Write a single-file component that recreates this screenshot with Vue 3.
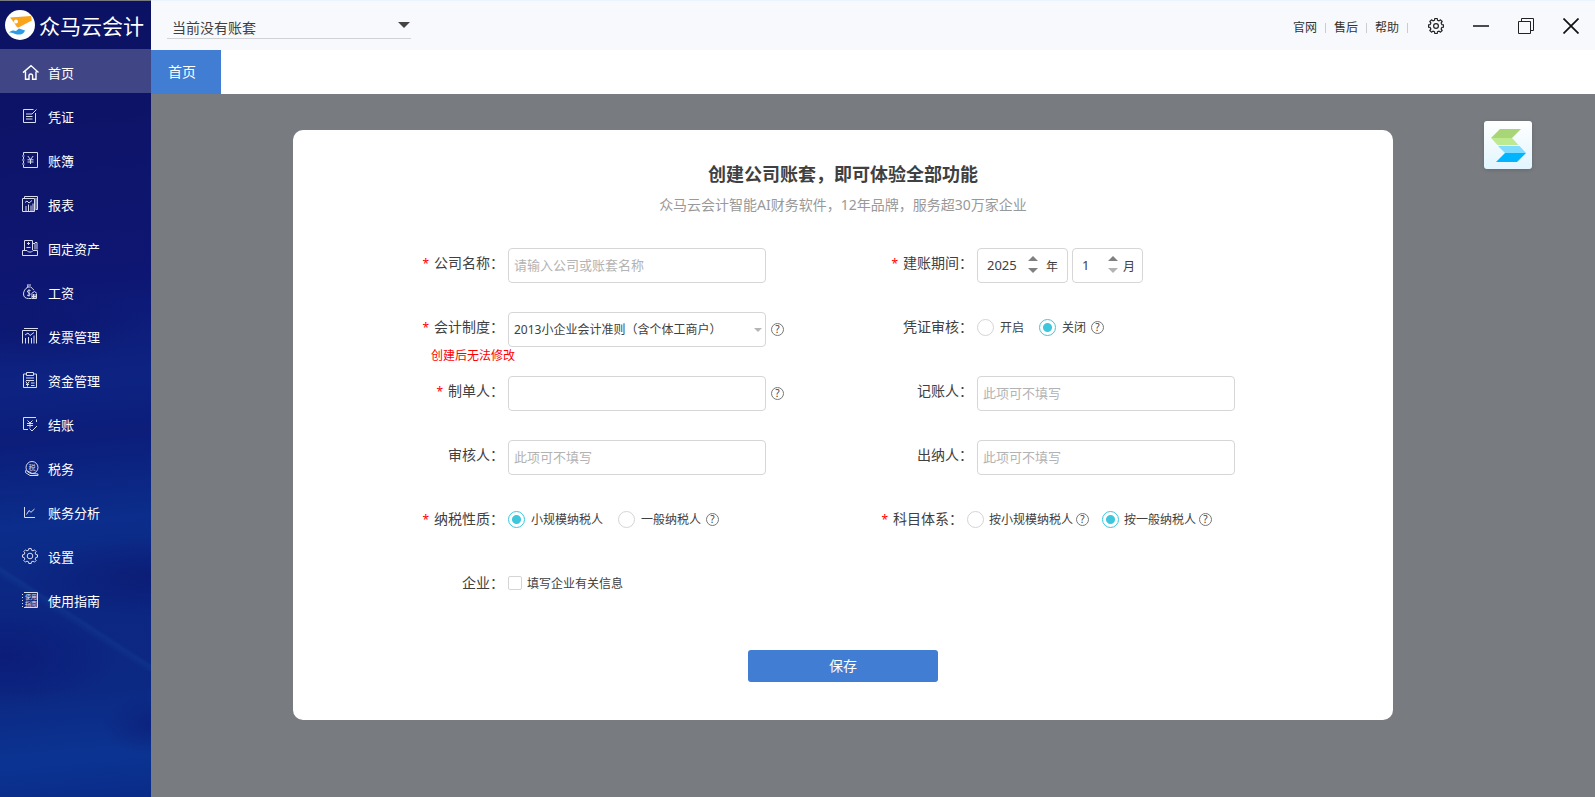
<script setup>
import { ref } from 'vue'

const menu = [
  { id: 'home', label: '首页' },
  { id: 'voucher', label: '凭证' },
  { id: 'ledger', label: '账簿' },
  { id: 'report', label: '报表' },
  { id: 'asset', label: '固定资产' },
  { id: 'salary', label: '工资' },
  { id: 'invoice', label: '发票管理' },
  { id: 'fund', label: '资金管理' },
  { id: 'closing', label: '结账' },
  { id: 'tax', label: '税务' },
  { id: 'analysis', label: '账务分析' },
  { id: 'setting', label: '设置' },
  { id: 'guide', label: '使用指南' },
]

// Outline of an eight-toothed gear centred on (8, 8).
function gearPath(outer, inner) {
  const at = (deg, r) => {
    const a = (deg * Math.PI) / 180
    return `${(8 + r * Math.cos(a)).toFixed(2)} ${(8 + r * Math.sin(a)).toFixed(2)}`
  }
  const points = []
  for (let i = 0; i < 8; i++) {
    const c = i * 45
    points.push(at(c - 14, inner), at(c - 9, outer), at(c + 9, outer), at(c + 14, inner))
  }
  return `M${points.join('L')}Z`
}
const gear = gearPath(7.6, 6)

const icons = {
  home: '<path d="M1 8.600 9 1.600l7.500 7M3.500 7.500V15.300H7v-3.500a1.800 1.800 0 0 1 3.600 0v3.500H14V7.500" stroke-width="1.4"/>',
  voucher: '<path d="M11.500 1.500h-10v13h12V5M4 6h6M4 8.500h6.500M4 11h6.500M10 6l4.500-4.500"/>',
  ledger: '<path d="M1.500 3V.5h14v15h-14V13M1.500 5v2M1.500 9v2M0 4h2.500M0 8h2.500M0 12h2.500M5.800 4l2.700 3.500L11.200 4M8.500 7.500V12M5.500 7.800h6M5.500 10h6"/>',
  report: '<path d="M2.500 2.500V.5h13v13h-2M.5 2.500h12v13H.5zM3 6.500l2-1.500 2 2 3-2.500M4 15V10M6.500 15V8.500M9 15V9.500M11 15V7.500"/><path d="M14 2v11"/>',
  asset: '<path d="M2.500 10V.5h8V10M4.500 7.500h4M5 3.500h3M6.500 2v3M11 3.500h2v6M13 2.500h2v7M.5 10.500h4.500l1.500 1.500h3l1.500-1.500h4.500v5H.5z"/>',
  salary: '<path d="M5 1h4M5.500 3h3M5.500 1.500l.5 1.500C3 4.500 1.500 7.500 1.500 10c0 3 2 4.500 5 4.500h3M8.500 3c1.500.7 2.500 1.800 3.300 3.200M8.500 6.500C6.500 5.700 5 6.500 5.500 8c.5 1 2.500.7 2.500 2.300C8 11.700 6.200 12 5 11M7 5.500v7M9.500 9.500 12.500 7.500l2.500 2M10 10v4.500h4.500V10M11.500 10v4.500M13 10v4.500M10 12.500h5"/>',
  invoice: '<path d="M2 .5h14M.5 15.500v-13h14v13M3 7l3-2 2 2.500 4-3M3.500 15.500V10M6.500 15.500V9M9.500 15.500V10M12 15.500V7.500"/>',
  fund: '<path d="M4 2H1.500v13.500h13V2H12M4.500.5h7v3h-7zM4 6h8M4 8.500h8M3.800 9.500 5.500 12l1.700-2.500M5.500 12v2.500M4 12.500h3M9 11h3.500M9 13.500h3.500"/>',
  closing: '<path d="M14.500 6V3.500M12 1.500H1.500v12H6M12 1.500h2M5.500 4.500 8 7l2.500-2.500M8 7v4.500M5 7.500h6M5 9.500h6M7.500 12.500 10 15l5-5"/>',
  tax: '<circle cx="10" cy="7.500" r="6"/><path d="M4 10l-.5 2.500L8 15.500h8V14l-6-.5-4.500-2.500"/><text x="6.500" y="10.200" font-size="7" fill="#d9dcec" stroke="none">税</text>',
  analysis: '<path d="M2.500 3v10.500H13M4.500 10.500 7 6.500l2 1.800L12.500 5"/>',
  setting: `<path d="${gear}"/><circle cx="8" cy="8" r="2.800"/>`,
  guide: '<path d="M2 .5h13.500v15H2M.5 2v1M.5 5v1M.5 8v1M.5 11v1M.5 14v1"/><text x="3" y="7.200" font-size="6" fill="#e4e6f2" stroke="none">使用</text><text x="3" y="13.600" font-size="6" fill="#e4e6f2" stroke="none">指南</text>',
}

const year = ref(2025)
const month = ref(1)
const audit = ref('off')
const nature = ref('small')
const subject = ref('general')
const companyInfo = ref(false)
const system = ref('2013')
const account = ref('none')
const form = ref({ company: '', maker: '', bookkeeper: '', auditor: '', cashier: '' })
</script>

<template>
  <div class="app">
    <aside class="sidebar">
      <div class="brand">
        <svg class="brand-logo" viewBox="0 0 30 30" aria-hidden="true">
          <circle cx="15" cy="15" r="15" fill="#fff" />
          <path d="M5 7.500 26 6 26.800 10.500 13 17.700C10.500 16.500 10.500 14 9 12.500z" fill="#fba31b" />
          <circle cx="11" cy="11.500" r="2" fill="#fff" />
          <path d="M4 22.500c3-2.500 5-2 7-1.500l3-2.500 6 2c-1 3.500-5 4.500-8 4-3-.5-5-2.500-8-2z" fill="#2e9be6" />
        </svg>
        <span>众马云会计</span>
      </div>
      <nav>
        <a v-for="(m, i) in menu" :key="m.id" href="#" class="menu-item" :class="{ active: i === 0 }">
          <svg viewBox="0 0 16 16" aria-hidden="true" v-html="icons[m.id]"></svg>
          <span>{{ m.label }}</span>
        </a>
      </nav>
    </aside>

    <div class="main">
      <header class="topbar">
        <div class="account">
          <select v-model="account" aria-label="账套">
            <option value="none">当前没有账套</option>
          </select>
          <svg viewBox="0 0 12 6" aria-hidden="true"><path d="M0 0h12L6 6z" fill="#444" /></svg>
        </div>
        <div class="top-right">
          <a href="#">官网</a>
          <a href="#">售后</a>
          <a href="#">帮助</a>
          <div class="window-tools">
            <button type="button" aria-label="设置">
              <svg viewBox="0 0 16 16" fill="none" stroke="#222" stroke-width="1.200" stroke-linejoin="round"><path :d="gear" /><circle cx="8" cy="8" r="2.400" /></svg>
            </button>
            <button type="button" aria-label="最小化">
              <svg viewBox="0 0 16 16" fill="none" stroke="#111" stroke-width="1.500"><path d="M0 8h16" /></svg>
            </button>
            <button type="button" aria-label="还原">
              <svg viewBox="0 0 16 16" fill="none" stroke="#222"><path d="M.5 3.500h12v12H.5zM3.500 3.500v-3h12v12h-3" /></svg>
            </button>
            <button type="button" aria-label="关闭">
              <svg viewBox="0 0 16 16" fill="none" stroke="#111" stroke-width="1.700"><path d="m.5.5 15 15M15.500.5l-15 15" /></svg>
            </button>
          </div>
        </div>
      </header>
      <div class="tabs"><button type="button" class="tab">首页</button></div>

      <main class="content">
        <button type="button" class="float-logo" aria-label="快捷入口">
          <svg viewBox="0 0 48 48" aria-hidden="true">
            <path d="M16 8h21l-9 9H7z" fill="#a8d676" />
            <path d="M7 17h21l6.500 7H13.500z" fill="#bdea90" />
            <path d="M14 25h21.500l6.500 7H21z" fill="#7edcff" />
            <path d="M21 32h21l-9 9H12z" fill="#00b4ff" />
          </svg>
        </button>

        <form class="card" @submit.prevent>
          <h1>创建公司账套，即可体验全部功能</h1>
          <p class="subtitle">众马云会计智能AI财务软件，12年品牌，服务超30万家企业</p>

          <div class="fields">
            <div class="field">
              <label class="label required" for="company">公司名称：</label>
              <input id="company" v-model="form.company" class="text" placeholder="请输入公司或账套名称" />
            </div>
            <div class="field">
              <label class="label required" for="year">建账期间：</label>
              <div class="period">
                <div class="stepper year">
                  <input id="year" v-model="year" inputmode="numeric" />
                  <div class="arrows">
                    <button type="button" class="up" aria-label="下一年" @click="year++"></button>
                    <button type="button" class="down" aria-label="上一年" @click="year--"></button>
                  </div>
                  <label for="year">年</label>
                </div>
                <div class="stepper month">
                  <input id="month" v-model="month" inputmode="numeric" />
                  <div class="arrows">
                    <button type="button" class="up" aria-label="下一月" @click="month++"></button>
                    <button type="button" class="down" aria-label="上一月" :disabled="month <= 1" @click="month--"></button>
                  </div>
                  <label for="month">月</label>
                </div>
              </div>
            </div>

            <div class="field">
              <label class="label required" for="system">会计制度：</label>
              <div class="with-help">
                <div class="select-box">
                  <select id="system" v-model="system" class="text">
                    <option value="2013">2013小企业会计准则（含个体工商户）</option>
                  </select>
                  <svg viewBox="0 0 8 4" aria-hidden="true"><path d="M0 0h8L4 4z" fill="#b5b5b5" /></svg>
                </div>
                <span class="help">?</span>
              </div>
              <p class="note">创建后无法修改</p>
            </div>
            <div class="field">
              <span class="label">凭证审核：</span>
              <div class="options">
                <label><input v-model="audit" type="radio" name="audit" value="on" />开启</label>
                <label><input v-model="audit" type="radio" name="audit" value="off" />关闭</label>
                <span class="help">?</span>
              </div>
            </div>

            <div class="field">
              <label class="label required" for="maker">制单人：</label>
              <div class="with-help">
                <input id="maker" v-model="form.maker" class="text" />
                <span class="help">?</span>
              </div>
            </div>
            <div class="field">
              <label class="label" for="bookkeeper">记账人：</label>
              <input id="bookkeeper" v-model="form.bookkeeper" class="text" placeholder="此项可不填写" />
            </div>

            <div class="field">
              <label class="label" for="auditor">审核人：</label>
              <input id="auditor" v-model="form.auditor" class="text" placeholder="此项可不填写" />
            </div>
            <div class="field">
              <label class="label" for="cashier">出纳人：</label>
              <input id="cashier" v-model="form.cashier" class="text" placeholder="此项可不填写" />
            </div>

            <div class="field">
              <span class="label required">纳税性质：</span>
              <div class="options">
                <label><input v-model="nature" type="radio" name="nature" value="small" />小规模纳税人</label>
                <label><input v-model="nature" type="radio" name="nature" value="general" />一般纳税人</label>
                <span class="help">?</span>
              </div>
            </div>
            <div class="field narrow">
              <span class="label required">科目体系：</span>
              <div class="options tight">
                <label><input v-model="subject" type="radio" name="subject" value="small" />按小规模纳税人</label>
                <span class="help">?</span>
                <label><input v-model="subject" type="radio" name="subject" value="general" />按一般纳税人</label>
                <span class="help">?</span>
              </div>
            </div>

            <div class="field">
              <span class="label">企业：</span>
              <div class="options">
                <label class="check"><input v-model="companyInfo" type="checkbox" />填写企业有关信息</label>
              </div>
            </div>
          </div>

          <button type="submit" class="save">保存</button>
        </form>
      </main>
    </div>
  </div>
</template>

<style>
body {
  margin: 0;
}
</style>

<style scoped>
.app,
.app * {
  box-sizing: border-box;
}
.app {
  display: flex;
  min-height: 100vh;
  font-family: "Noto Sans", "Noto Sans CJK SC", sans-serif;
  font-size: 12px;
  color: #404040;
}
a {
  color: inherit;
  text-decoration: none;
}
button {
  padding: 0;
  border: 0;
  background: none;
  font: inherit;
  cursor: pointer;
}
input,
select {
  font: inherit;
  color: inherit;
}

.sidebar {
  flex: none;
  width: 151px;
  border-top: 1px solid #777b80;
  color: #fff;
  background:
    linear-gradient(213deg, transparent 49%, rgba(24, 70, 155, 0.3) 51%, transparent 55%) 0 560px / 151px 110px no-repeat,
    radial-gradient(ellipse 110px 50px at 5% 655px, rgba(12, 26, 118, 0.8), transparent),
    radial-gradient(ellipse 130px 40px at 100% 576px, rgba(12, 26, 115, 0.8), transparent),
    radial-gradient(ellipse 50px 30px at 100% 724px, rgba(11, 30, 120, 0.7), transparent),
    radial-gradient(ellipse 110px 40px at 25% 325px, rgba(11, 20, 105, 0.5), transparent),
    linear-gradient(175deg, #0b1162 0, #0d1468 120px, #0d1672 280px, #0d2382 385px, #0c1d7a 440px, #0b2d8b 525px, #0b2782 600px, #0b2882 690px, #0b3492 760px, #0a2b88 100%);
}
.brand {
  display: flex;
  align-items: center;
  gap: 4px;
  height: 48px;
  padding-left: 5px;
  font-size: 21px;
  white-space: nowrap;
}
.brand-logo {
  flex: none;
  width: 30px;
  height: 30px;
}
.menu-item {
  display: flex;
  align-items: center;
  gap: 10px;
  height: 44px;
  padding: 2px 0 0 22px;
  font-size: 13px;
}
.menu-item.active {
  background: #404685;
}
.menu-item svg {
  overflow: visible;
  width: 16px;
  height: 16px;
  fill: none;
  stroke: #d9dcec;
  stroke-width: 1;
}
.menu-item.active svg {
  stroke: #fff;
}

.main {
  flex: 1;
  min-width: 0;
  display: flex;
  flex-direction: column;
}
.topbar {
  display: flex;
  justify-content: space-between;
  height: 50px;
  padding: 0 2px 0 16px;
  border-top: 1px solid #eaf4fe;
  background: #f8f9fd;
}
.account {
  position: relative;
  width: 244px;
  height: 38px;
  border-bottom: 1px solid #d0d2d6;
}
.account select {
  appearance: none;
  width: 100%;
  height: 37px;
  padding: 16px 20px 0 5px;
  border: 0;
  background: none;
  font-size: 14px;
  line-height: 20px;
}
.account svg {
  position: absolute;
  top: 21px;
  right: 1px;
  width: 12px;
  height: 6px;
  pointer-events: none;
}
.top-right {
  display: flex;
  align-items: center;
  height: 50px;
  color: #333;
}
.top-right > a {
  display: flex;
  align-items: center;
  width: 41px;
  padding-top: 4px;
  line-height: 18px;
}
.top-right > a::after {
  content: "";
  width: 1px;
  height: 10px;
  margin-left: 8px;
  background: #ccc;
}
.window-tools {
  display: flex;
  margin-left: -3px;
}
.window-tools button {
  display: flex;
  align-items: center;
  justify-content: center;
  width: 45px;
  height: 50px;
}
.window-tools svg {
  width: 16px;
  height: 16px;
}
.tabs {
  display: flex;
  height: 44px;
  background: #fff;
}
.tab {
  width: 70px;
  padding: 0 8px 2px 0;
  background: #417dd3;
  color: #fff;
  font-size: 14px;
}
.content {
  position: relative;
  flex: 1;
  padding: 36px 92px 48px 32px;
  background: #787b7f;
}
.float-logo {
  position: absolute;
  top: 27px;
  right: 63px;
  width: 48px;
  height: 48px;
  border-radius: 3px;
  background: linear-gradient(#fff, #e2f5fe);
  box-shadow: 0 1px 4px rgba(0, 0, 0, 0.15);
}
.float-logo svg {
  display: block;
}

.card {
  display: flex;
  flex-direction: column;
  align-items: center;
  max-width: 1100px;
  margin: 0 auto;
  padding: 31px 0 38px;
  border-radius: 10px;
  background: #fff;
}
h1 {
  margin: 0;
  font-size: 18px;
  line-height: 26px;
}
.subtitle {
  margin: 7px 0 32px;
  font-size: 14px;
  line-height: 22px;
  color: #999;
}
.fields {
  display: grid;
  grid-template-columns: 1fr 1fr;
  grid-auto-rows: 64px;
  width: 100%;
  max-width: 938px;
}
.field {
  display: grid;
  grid-template-columns: 130px 1fr;
  column-gap: 4px;
  align-content: start;
}
.field.narrow {
  grid-template-columns: 120px 1fr;
}
.label {
  font-size: 14px;
  line-height: 30px;
  text-align: right;
  white-space: nowrap;
}
.required::before {
  content: "*";
  margin-right: 5px;
  color: #f00;
  font-size: 12px;
}
.text {
  display: block;
  width: 258px;
  height: 35px;
  padding: 0 5px 2px;
  border: 1px solid #d6d6d6;
  border-radius: 4px;
  background: #fff;
  font-size: 13px;
}
.text::placeholder {
  color: #b3b3b3;
  opacity: 1;
}
.select-box {
  position: relative;
}
.select-box select {
  appearance: none;
  padding-bottom: 0;
  font-size: 12px;
}
.select-box svg {
  position: absolute;
  top: 16px;
  right: 4px;
  width: 8px;
  height: 4px;
  pointer-events: none;
}
.with-help {
  display: flex;
  align-items: center;
  gap: 5px;
}
.help {
  flex: none;
  width: 13px;
  height: 13px;
  border: 1px solid #777;
  border-radius: 50%;
  font-size: 10px;
  line-height: 11px;
  text-align: center;
}
.note {
  grid-column: 1 / -1;
  margin: 0;
  padding-left: 57px;
  line-height: 18px;
  color: #f00;
}
.period {
  display: flex;
  gap: 4px;
}
.stepper {
  display: flex;
  align-items: center;
  height: 35px;
  padding: 0 9px;
  border: 1px solid #d6d6d6;
  border-radius: 4px;
}
.stepper.year {
  width: 91px;
}
.stepper.month {
  width: 71px;
  padding-right: 7px;
}
.stepper input {
  flex: 1;
  min-width: 0;
  padding: 0 0 2px;
  border: 0;
  font-size: 13px;
}
.arrows {
  display: flex;
  flex-direction: column;
  gap: 7px;
  margin: 0 8px 2px 0;
}
.arrows button {
  border: 5px solid transparent;
}
.arrows .up {
  border-top: 0;
  border-bottom-color: #808080;
}
.arrows .down {
  border-bottom: 0;
  border-top-color: #808080;
}
.arrows .down:disabled {
  border-top-color: #b3b3b3;
}
.month .arrows {
  margin-right: 5px;
}
.options {
  display: flex;
  align-items: center;
  height: 30px;
  white-space: nowrap;
}
.options label {
  display: flex;
  align-items: center;
  gap: 6px;
}
.options label + label {
  margin-left: 15px;
}
.options .help {
  margin-left: 5px;
}
.options.tight label {
  gap: 5px;
}
.options.tight .help {
  margin-left: 3px;
}
.options .help + label {
  margin-left: 13px;
}
.options input {
  appearance: none;
  flex: none;
  width: 17px;
  height: 17px;
  margin: 0;
  border: 1px solid #d4d4d4;
  border-radius: 50%;
  background: #fff;
}
.options input[type="radio"]:checked {
  border-color: #3ec6dc;
  background: radial-gradient(circle, #3ec6dc 4px, #fff 5px);
}
.options .check input {
  width: 14px;
  height: 14px;
  border-radius: 2px;
}
.options .check {
  gap: 5px;
}
.save {
  width: 190px;
  height: 32px;
  margin-top: 18px;
  padding-bottom: 2px;
  border-radius: 3px;
  background: #417dd3;
  color: #fff;
  font-size: 14px;
}
</style>
